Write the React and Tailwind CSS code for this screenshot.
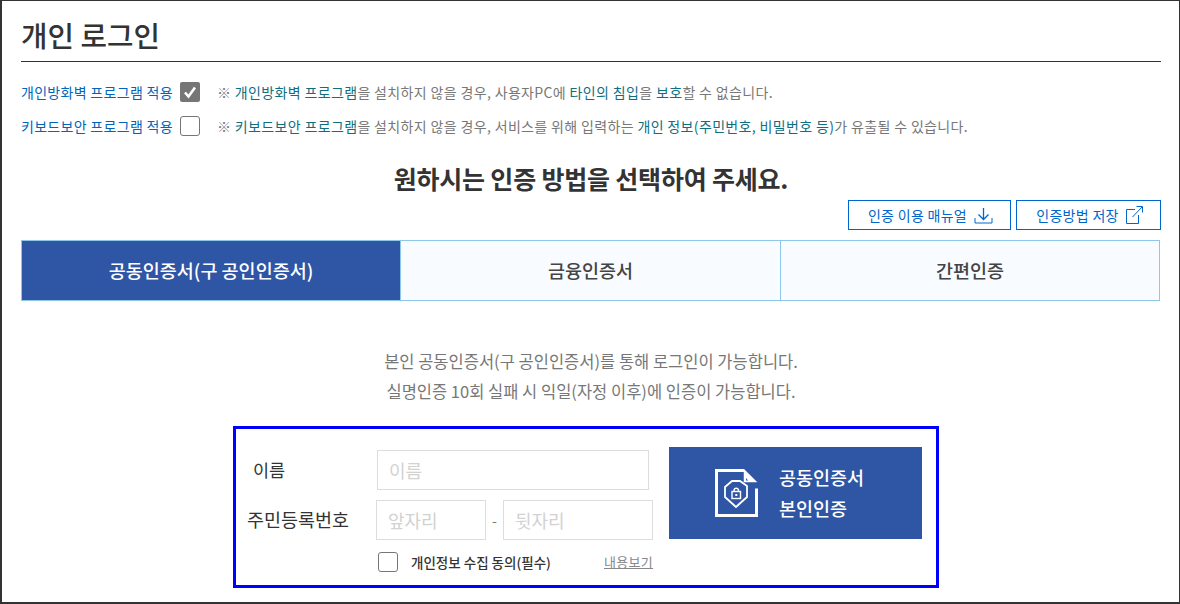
const FONT = "font-['Noto_Sans_CJK_KR','Noto_Sans',sans-serif]";

const TABS = ["공동인증서(구 공인인증서)", "금융인증서", "간편인증"];

function Hl({ children }) {
  return <span className="text-[#0f6f80]">{children}</span>;
}

function Check({ checked }) {
  if (checked) {
    return (
      <span className="flex h-5 w-5 items-center justify-center rounded-[2px] bg-[#767676]">
        <svg width="14" height="14" viewBox="0 0 14 14" fill="none">
          <path d="M2 7.500l3.500 4L12 2.500" stroke="#fff" strokeWidth="2.600" />
        </svg>
      </span>
    );
  }
  return <span className="block h-5 w-5 rounded-[3px] border border-[#767676] bg-white" />;
}

function DownloadIcon() {
  return (
    <svg width="19" height="17" viewBox="0 0 19 17" fill="none" stroke="#0066cc" strokeWidth="1">
      <path d="M9.500 1v11M4.500 7.500l5 5 5-5" strokeWidth="1.300" />
      <path d="M1 11v5h17v-5" />
    </svg>
  );
}

function LinkIcon() {
  return (
    <svg width="17" height="18" viewBox="0 0 17 18" fill="none" stroke="#0066cc" strokeWidth="1">
      <path d="M9 3.500H.5v14h12V9" />
      <path d="M6.500 11L16 1M10.500.5h6V6.500" />
    </svg>
  );
}

function CertIcon() {
  return (
    <svg width="43" height="48" viewBox="0 0 43 48" fill="none" stroke="#fff">
      <path d="M29 1.500H1.500v45h40V19.500" strokeWidth="3" />
      <path d="M29.500 1.500v11h11z" fill="#fff" strokeWidth="1.500" />
      <path d="M33 11.500h-2V9z" fill="#2f55a5" stroke="none" />
      <path d="M10 18l7-6h8l7 5v11L21 38 10 28z" strokeWidth="1.800" />
      <rect x="17" y="22.500" width="8.500" height="7" strokeWidth="1.400" />
      <path d="M19 22.500V21a2.300 2.300 0 0 1 4.500 0v1.500" strokeWidth="1.400" />
      <rect x="20.300" y="25" width="2" height="2" fill="#fff" stroke="none" />
    </svg>
  );
}

function TextInput({ placeholder, className }) {
  return (
    <input
      placeholder={placeholder}
      className={`h-10 border border-[#dddddd] bg-white px-[11px] text-[18px] outline-none placeholder:text-[#d2d2d2] ${className}`}
    />
  );
}

export default function App() {
  return (
    <div className={`${FONT} h-[604px] w-[1180px] overflow-hidden border-t border-b-2 border-l-2 border-r border-[#333333] bg-white`}>
      <div className="pl-[19px] pr-[18px]">
        <h1 className="h-[61px] border-b border-[#333333] pt-[13px] text-[28.800px] leading-[42px] font-medium text-[#333333]">
          개인 로그인
        </h1>

        <div className="mt-[20px] flex h-5 items-center">
          <span className="w-[159px] text-[14px] tracking-[0.3px] text-[#0066bb]">개인방화벽 프로그램 적용</span>
          <Check checked />
          <span className="ml-[17px] text-[14px] tracking-[0.35px] text-[#777777]">
            ※ <Hl>개인방화벽 프로그램</Hl>을 설치하지 않을 경우, 사용자PC에 <Hl>타인의 침입</Hl>을 <Hl>보호</Hl>할 수 없습니다.
          </span>
        </div>
        <div className="mt-[14px] flex h-5 items-center">
          <span className="w-[159px] text-[14px] tracking-[0.3px] text-[#0066bb]">키보드보안 프로그램 적용</span>
          <Check />
          <span className="ml-[17px] text-[14px] tracking-[0.35px] text-[#777777]">
            ※ <Hl>키보드보안 프로그램</Hl>을 설치하지 않을 경우, 서비스를 위해 입력하는 <Hl>개인 정보(주민번호, 비밀번호 등)</Hl>가 유출될 수 있습니다.
          </span>
        </div>

        <h2 className="mt-[23px] text-center text-[25px] leading-[38px] font-bold tracking-[-0.2px] text-[#333333]">
          원하시는 인증 방법을 선택하여 주세요.
        </h2>

        <div className="mt-[3px] flex justify-end gap-[5px]">
          <button className="flex h-[30px] w-[163px] items-center justify-center gap-[7px] border border-[#0066cc] pl-[2px] text-[14px] tracking-[0.3px] text-[#0066cc]">
            인증 이용 매뉴얼 <DownloadIcon />
          </button>
          <button className="flex h-[30px] w-[145px] items-center justify-center gap-[7px] border border-[#0066cc] pl-[2px] text-[14px] tracking-[0.3px] text-[#0066cc]">
            인증방법 저장 <LinkIcon />
          </button>
        </div>

        <div className="mt-[10px] grid h-[61px] w-[1139px] grid-cols-[379px_380px_1fr] border border-[#8ec7e8] bg-[#f8fbff]">
          {TABS.map((t, i) => (
            <div
              key={t}
              className={`flex items-center justify-center text-[18.500px] font-medium ${
                i === 0 ? "bg-[#2f55a5] text-white" : "text-[#444444]"
              } ${i < 2 ? "border-r border-[#8ec7e8]" : ""}`}
            >
              {t}
            </div>
          ))}
        </div>

        <div className="mt-[45px] text-center text-[16.500px] leading-[30px] text-[#777777]">
          <p>본인 공동인증서(구 공인인증서)를 통해 로그인이 가능합니다.</p>
          <p>실명인증 10회 실패 시 익일(자정 이후)에 인증이 가능합니다.</p>
        </div>

        <div className="mt-[20px] ml-[212px] flex h-[162px] w-[706px] border-[3px] border-[#0000ff] pt-[18px] pl-[9px]">
          <div className="w-[424px]">
            <div className="flex items-center pt-[3px]">
              <span className="w-[132px] pl-[8px] text-[17.500px] text-[#333333]">이름</span>
              <TextInput placeholder="이름" className="w-[272px]" />
            </div>
            <div className="mt-[10px] flex items-center">
              <span className="w-[131px] pl-[2px] text-[18.500px] text-[#333333]">주민등록번호</span>
              <TextInput placeholder="앞자리" className="w-[110px]" />
              <span className="w-[17px] text-center text-[14px] text-[#777777]">-</span>
              <TextInput placeholder="뒷자리" className="w-[150px]" />
            </div>
            <div className="mt-[12px] flex items-center pl-[133px]">
              <Check />
              <span className="ml-[13px] w-[193px] text-[13.500px] font-medium text-[#333333]">개인정보 수집 동의(필수)</span>
              <span className="text-[13px] tracking-[0.3px] text-[#888888] underline">내용보기</span>
            </div>
          </div>
          <div className="flex h-[92px] w-[253px] items-center gap-[21px] bg-[#2f55a5] pl-[46px] text-[18.500px] leading-[31px] font-medium text-white">
            <CertIcon />
            <div>
              <div>공동인증서</div>
              <div>본인인증</div>
            </div>
          </div>
        </div>
      </div>
    </div>
  );
}
